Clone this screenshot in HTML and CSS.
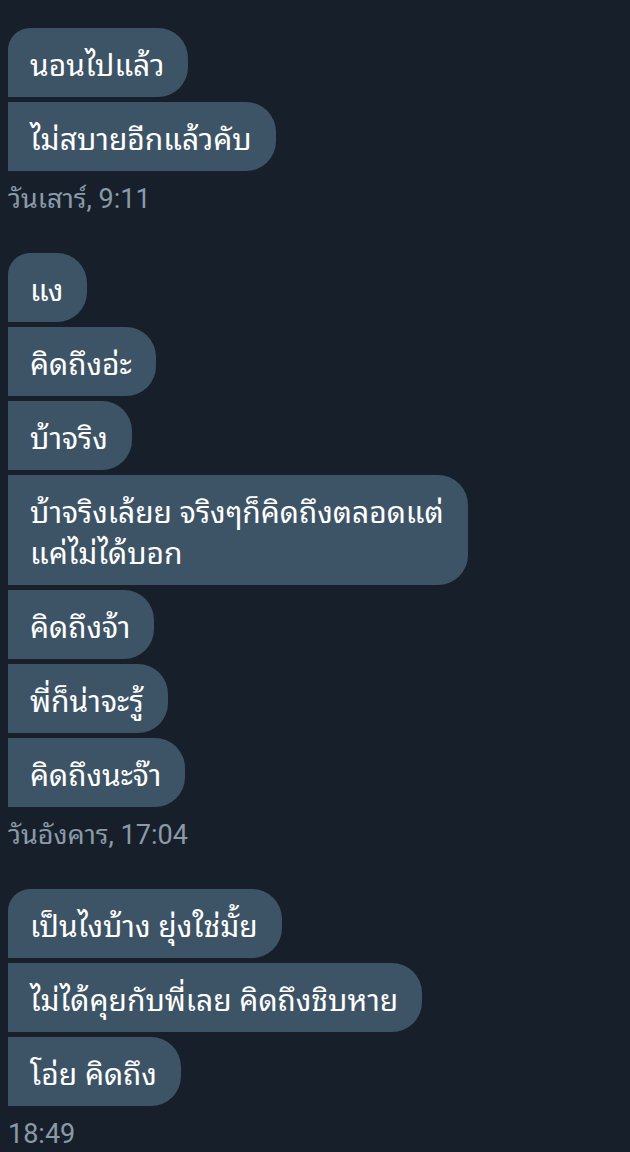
FILE: index.html
```html
<!DOCTYPE html>
<html lang="th">
<head>
<meta charset="utf-8">
<link rel="stylesheet" href="styles.css">
</head>
<body>
<main class="chat">
  <section class="group">
    <div class="bubble first">นอนไปแล้ว</div>
    <div class="bubble">ไม่สบายอีกแล้วคับ</div>
    <div class="time">วันเสาร์, 9:11</div>
  </section>
  <section class="group">
    <div class="bubble first">แง</div>
    <div class="bubble">คิดถึงอ่ะ</div>
    <div class="bubble">บ้าจริง</div>
    <div class="bubble">บ้าจริงเล้ยย จริงๆก็คิดถึงตลอดแต่<br>แค่ไม่ได้บอก</div>
    <div class="bubble">คิดถึงจ้า</div>
    <div class="bubble">พี่ก็น่าจะรู้</div>
    <div class="bubble">คิดถึงนะจ๊า</div>
    <div class="time">วันอังคาร, 17:04</div>
  </section>
  <section class="group">
    <div class="bubble first">เป็นไงบ้าง ยุ่งใช่มั้ย</div>
    <div class="bubble">ไม่ได้คุยกับพี่เลย คิดถึงชิบหาย</div>
    <div class="bubble">โอ่ย คิดถึง</div>
    <div class="time">18:49</div>
  </section>
</main>
</body>
</html>
```

FILE: styles.css
```css
html, body {
  margin: 0;
  padding: 0;
  background: #17202a;
}
body {
  width: 630px;
  height: 1152px;
  overflow: hidden;
  font-family: "Noto Sans Thai Looped", "Loma", "Garuda", "Noto Sans Thai", "Noto Sans", Roboto, sans-serif;
}
.chat {
  display: flex;
  flex-direction: column;
  gap: 37px;
  padding: 28px 0 0 8px;
}
.group {
  display: flex;
  flex-direction: column;
  align-items: flex-start;
  gap: 5px;
}
.bubble {
  background: #3d5466;
  color: #ffffff;
  font-size: 30px;
  line-height: 41px;
  padding: 14px 24px 14px 22px;
  border-radius: 0 30px 30px 0;
}
.bubble.first {
  border-top-left-radius: 22px;
}
.time {
  margin-top: 6px;
  color: #8a9aa8;
  font-family: Roboto, "Noto Sans Thai Looped", "Noto Sans Thai", sans-serif;
  font-size: 27px;
  line-height: 34px;
}
```
